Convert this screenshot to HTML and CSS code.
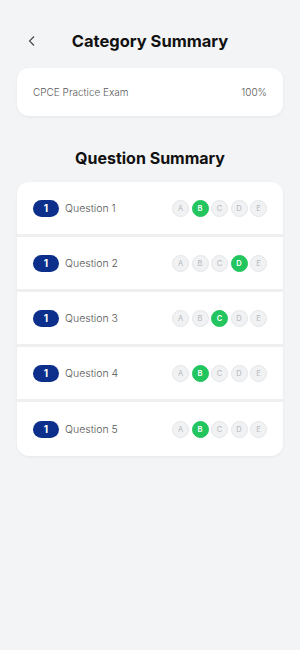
FILE: index.html
```html
<!DOCTYPE html>
<html>
<head>
<meta charset="utf-8">
<link rel="stylesheet" href="styles.css">
</head>
<body>
<div class="page">
  <header class="topbar">
    <span class="back">
      <svg width="10" height="12" viewBox="0 0 10 12"><path d="M7 1.5 L2.5 6 L7 10.5" fill="none" stroke="#444" stroke-width="1.1"/></svg>
    </span>
    <h1 class="title">Category Summary</h1>
  </header>

  <div class="card exam">
    <span class="exam-name">CPCE Practice Exam</span>
    <span class="exam-score">100%</span>
  </div>

  <h2 class="subtitle">Question Summary</h2>

  <div class="card list">
    <div class="row">
      <span class="badge">1</span><span class="qname">Question 1</span>
      <div class="opts"><span class="opt">A</span><span class="opt on">B</span><span class="opt">C</span><span class="opt">D</span><span class="opt">E</span></div>
    </div>
    <div class="row">
      <span class="badge">1</span><span class="qname">Question 2</span>
      <div class="opts"><span class="opt">A</span><span class="opt">B</span><span class="opt">C</span><span class="opt on">D</span><span class="opt">E</span></div>
    </div>
    <div class="row">
      <span class="badge">1</span><span class="qname">Question 3</span>
      <div class="opts"><span class="opt">A</span><span class="opt">B</span><span class="opt on">C</span><span class="opt">D</span><span class="opt">E</span></div>
    </div>
    <div class="row">
      <span class="badge">1</span><span class="qname">Question 4</span>
      <div class="opts"><span class="opt">A</span><span class="opt on">B</span><span class="opt">C</span><span class="opt">D</span><span class="opt">E</span></div>
    </div>
    <div class="row">
      <span class="badge">1</span><span class="qname">Question 5</span>
      <div class="opts"><span class="opt">A</span><span class="opt on">B</span><span class="opt">C</span><span class="opt">D</span><span class="opt">E</span></div>
    </div>
  </div>
</div>
</body>
</html>
```

FILE: styles.css
```css
html, body {
  margin: 0;
  padding: 0;
  background: #f3f4f6;
  font-family: Inter, "Open Sans", sans-serif;
}
.page {
  width: 300px;
  min-height: 650px;
  box-sizing: border-box;
  padding: 28px 17px 0 17px;
}
.topbar {
  height: 26px;
  display: flex;
  align-items: center;
  justify-content: center;
  position: relative;
}
.back {
  position: absolute;
  left: 10px;
  top: 7px;
  width: 10px;
  height: 12px;
  display: flex;
}
.title {
  margin: 0;
  font-size: 16.5px;
  font-weight: 700;
  color: #111;
  letter-spacing: 0;
}
.card {
  background: #fff;
  border-radius: 12px;
  box-shadow: 0 1px 3px rgba(0,0,0,0.06);
}
.exam {
  margin-top: 14px;
  height: 48px;
  display: flex;
  align-items: center;
  justify-content: space-between;
  padding: 0 16px;
  font-size: 10px;
  color: #5a5a5a;
  font-weight: 300;
}
.subtitle {
  margin: 30px 0 0 0;
  text-align: center;
  font-size: 16px;
  font-weight: 700;
  color: #111;
  height: 24px;
  line-height: 24px;
}
.list {
  margin-top: 12px;
  overflow: hidden;
}
.row {
  height: 52px;
  display: flex;
  align-items: center;
  padding: 0 16px;
  border-bottom: 3px solid #eeeff1;
}
.row:last-child {
  border-bottom: none;
  height: 54px;
}
.badge {
  width: 26px;
  height: 17px;
  border-radius: 9px;
  background: #0b2f8a;
  color: #fff;
  font-size: 10px;
  font-weight: 700;
  display: flex;
  align-items: center;
  justify-content: center;
}
.qname {
  margin-left: 6px;
  font-size: 10.5px;
  color: #555;
  font-weight: 300;
  flex: 1;
}
.opts {
  display: flex;
  gap: 2.5px;
  margin-right: 0;
}
.opt {
  width: 15px;
  height: 15px;
  border-radius: 50%;
  background: #f1f2f4;
  border: 1px solid #e4e5e8;
  color: #b5b7bb;
  font-size: 7.5px;
  display: flex;
  align-items: center;
  justify-content: center;
  box-sizing: content-box;
}
.opt.on {
  background: #22c55e;
  border-color: #22c55e;
  color: #fff;
  font-weight: 600;
}
```
